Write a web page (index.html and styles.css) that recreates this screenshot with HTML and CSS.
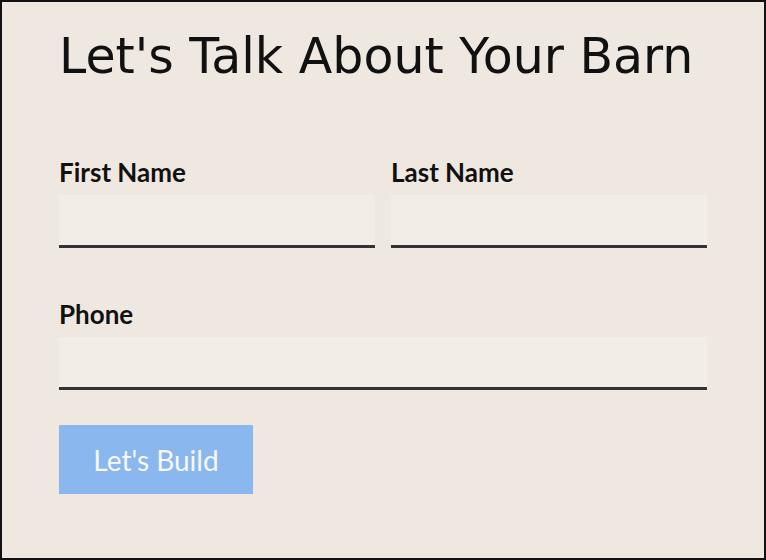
FILE: index.html
```html
<!DOCTYPE html>
<html>
<head>
  <title>Let's Talk About Your Barn</title>
  <link rel="stylesheet" href="styles.css">
</head>
<body>
  <div class="frame">
    <h1 class="title">Let's Talk About Your Barn</h1>

    <form class="contact-form">
      <div class="form-row">
        <div class="field">
          <label for="firstName">First Name</label>
          <input type="text" id="firstName">
        </div>
        <div class="field">
          <label for="lastName">Last Name</label>
          <input type="text" id="lastName">
        </div>
      </div>

      <div class="form-row form-row-last">
        <div class="field">
          <label for="phone">Phone</label>
          <input type="tel" id="phone">
        </div>
      </div>

      <button type="button" class="build-button">Let's Build</button>
    </form>
  </div>
</body>
</html>
```

FILE: styles.css
```css
/* Page frame */
body {
  margin: 0;
}

.frame {
  box-sizing: border-box;
  height: 560px;
  border: 2px solid #111;
  background: #efe8e1;
  padding: 0 57px;
}

/* Heading */
.title {
  margin: 0;
  padding-top: 27px;
  font-family: "DejaVu Sans", sans-serif;
  font-weight: normal;
  font-size: 49px;
  line-height: 56px;
  color: #111;
}

/* Form */
.contact-form {
  margin-top: 72px;
}

.form-row {
  display: flex;
  gap: 16px;
  margin-bottom: 51px;
}

.form-row-last {
  margin-bottom: 35px;
}

.field {
  flex: 1;
  display: flex;
  flex-direction: column;
}

.field label {
  font-family: Lato, sans-serif;
  font-weight: bold;
  font-size: 26px;
  line-height: 30px;
  color: #111;
  margin-bottom: 8px;
}

.field input {
  box-sizing: border-box;
  height: 53px;
  border: none;
  border-bottom: 3px solid #333;
  background: #f3ede7;
  font-family: Lato, sans-serif;
  font-size: 20px;
  padding: 0 10px;
}

.build-button {
  display: block;
  width: 194px;
  height: 69px;
  border: none;
  background: #8ab7ee;
  color: #f6f8fb;
  font-family: Lato, sans-serif;
  font-size: 28px;
}
```
